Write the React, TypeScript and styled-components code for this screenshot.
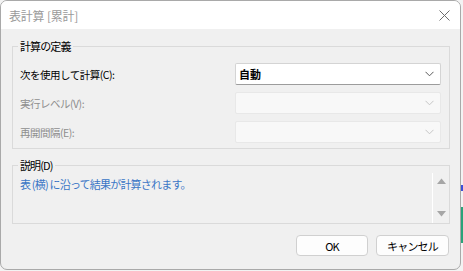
import React from "react";
import styled, { createGlobalStyle } from "styled-components";

const GlobalStyle = createGlobalStyle`
  body {
    margin: 0;
    background: #f3f3f3;
    font-family: "Noto Sans CJK JP", "Noto Sans", sans-serif;
    font-size: 11px;
  }
`;

const Page = styled.div`
  display: flex;
  width: 463px;
  height: 271px;
  overflow: hidden;
`;

const Window = styled.div`
  width: 459px;
  height: 268px;
  flex: none;
  display: flex;
  flex-direction: column;
  border: 1px solid #a9a9a9;
  border-radius: 7px;
  overflow: hidden;
  background: #f0f0f0;
`;

const TitleBar = styled.div`
  height: 28px;
  flex: none;
  display: flex;
  align-items: center;
  justify-content: space-between;
  padding: 0 10px 0 8px;
  background: #ffffff;
  color: #9a9a9a;
  font-size: 12px;
  letter-spacing: -0.2px;
`;

const Body = styled.div`
  flex: 1;
  display: flex;
  flex-direction: column;
  padding: 9px 10px 0 11px;
`;

const GroupBox = styled.fieldset<{ $gap?: number }>`
  margin: ${(p) => p.$gap ?? 0}px 0 0;
  padding: 0 0 0 7px;
  border: 1px solid #dadada;
  min-width: 0;
`;

const Legend = styled.legend`
  margin-left: -2px;
  padding: 0 2px;
  line-height: 16px;
  color: #000;
  letter-spacing: -0.9px;
`;

const Rows = styled.div`
  display: grid;
  grid-template-columns: 1fr 206px;
  row-gap: 7px;
  align-items: center;
  padding: 9px 8px 5px 0;
`;

const Label = styled.span<{ $disabled?: boolean }>`
  color: ${(p) => (p.$disabled ? "#8e8e8e" : "#000")};
  font-size: 10.5px;
  letter-spacing: -0.5px;
`;

const Select = styled.div<{ $disabled?: boolean }>`
  height: 20px;
  display: flex;
  align-items: center;
  justify-content: space-between;
  padding: 0 6px 0 3px;
  background: ${(p) => (p.$disabled ? "#f8f8f8" : "#ffffff")};
  border: 1px solid ${(p) => (p.$disabled ? "#e8e8e8" : "#d4d4d4")};
  border-bottom-color: ${(p) => (p.$disabled ? "#e8e8e8" : "#9c9c9c")};
  border-radius: 2px;
  font-weight: 700;
  color: #000;
`;

const Chevron = ({ disabled }: { disabled?: boolean }) => (
  <svg width="9" height="6" viewBox="0 0 9 6">
    <path
      d="M0.5 0.8 L4.5 4.8 L8.5 0.8"
      fill="none"
      stroke={disabled ? "#c6c6c6" : "#5a5a5a"}
      strokeWidth="1"
    />
  </svg>
);

const Description = styled.div`
  height: 50px;
  display: flex;
`;

const DescText = styled.div`
  flex: 1;
  padding-top: 3px;
  color: #3a76c6;
  letter-spacing: -0.8px;
`;

const ScrollBar = styled.div`
  width: 16px;
  display: flex;
  flex-direction: column;
  justify-content: space-between;
  align-items: center;
  padding: 5px 0 6px;
  border-left: 1px solid #ffffff;
`;

const Arrow = ({ up }: { up?: boolean }) => (
  <svg width="9" height="6" viewBox="0 0 9 6">
    <path d={up ? "M0 6 L4.5 0.5 L9 6 Z" : "M0 0 L4.5 5.5 L9 0 Z"} fill="#a6a6a6" />
  </svg>
);

const ButtonRow = styled.div`
  display: flex;
  justify-content: flex-end;
  gap: 8px;
  margin-top: 11px;
  padding-right: 1px;
`;

const Button = styled.div<{ $w: number }>`
  width: ${(p) => p.$w}px;
  height: 19px;
  display: flex;
  align-items: center;
  justify-content: center;
  background: #fdfdfd;
  border: 1px solid #d0d0d0;
  border-radius: 4px;
  color: #000;
  letter-spacing: -0.8px;
`;

const Backdrop = styled.div`
  flex: 1;
  display: flex;
  flex-direction: column;
  padding-top: 185px;
  gap: 16px;
`;

const Bit = styled.div<{ $c: string; $h: number }>`
  height: ${(p) => p.$h}px;
  background: ${(p) => p.$c};
`;

export default function App() {
  return (
    <>
      <GlobalStyle />
      <Page>
        <Window>
          <TitleBar>
            <span>表計算 [累計]</span>
            <svg width="11" height="11" viewBox="0 0 11 11">
              <path d="M0.5 0.5 L10.5 10.5 M10.5 0.5 L0.5 10.5" stroke="#6e6e6e" strokeWidth="1" />
            </svg>
          </TitleBar>
          <Body>
            <GroupBox>
              <Legend>計算の定義</Legend>
              <Rows>
                <Label>次を使用して計算(C):</Label>
                <Select>
                  <span>自動</span>
                  <Chevron />
                </Select>
                <Label $disabled>実行レベル(V):</Label>
                <Select $disabled>
                  <span />
                  <Chevron disabled />
                </Select>
                <Label $disabled>再開間隔(E):</Label>
                <Select $disabled>
                  <span />
                  <Chevron disabled />
                </Select>
              </Rows>
            </GroupBox>
            <GroupBox $gap={8}>
              <Legend>説明(D)</Legend>
              <Description>
                <DescText>表 (横) に沿って結果が計算されます。</DescText>
                <ScrollBar>
                  <Arrow up />
                  <Arrow />
                </ScrollBar>
              </Description>
            </GroupBox>
            <ButtonRow>
              <Button $w={70}>OK</Button>
              <Button $w={71}>キャンセル</Button>
            </ButtonRow>
          </Body>
        </Window>
        <Backdrop>
          <Bit $c="#3d4fd8" $h={6} />
          <Bit $c="#2aa37a" $h={36} />
        </Backdrop>
      </Page>
    </>
  );
}
